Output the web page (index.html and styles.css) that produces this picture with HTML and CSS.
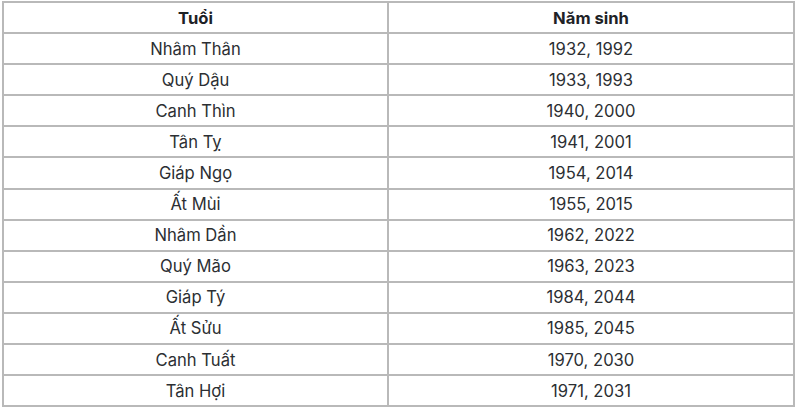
FILE: index.html
```html
<!DOCTYPE html>
<html lang="vi">
<head>
<meta charset="utf-8">
<link rel="stylesheet" href="styles.css">
</head>
<body>
<table class="age-table">
  <colgroup><col class="col-age"><col class="col-year"></colgroup>
  <thead>
    <tr><th>Tuổi</th><th>Năm sinh</th></tr>
  </thead>
  <tbody>
    <tr><td>Nhâm Thân</td><td>1932, 1992</td></tr>
    <tr><td>Quý Dậu</td><td>1933, 1993</td></tr>
    <tr><td>Canh Thìn</td><td>1940, 2000</td></tr>
    <tr><td>Tân Tỵ</td><td>1941, 2001</td></tr>
    <tr><td>Giáp Ngọ</td><td>1954, 2014</td></tr>
    <tr><td>Ất Mùi</td><td>1955, 2015</td></tr>
    <tr><td>Nhâm Dần</td><td>1962, 2022</td></tr>
    <tr><td>Quý Mão</td><td>1963, 2023</td></tr>
    <tr><td>Giáp Tý</td><td>1984, 2044</td></tr>
    <tr><td>Ất Sửu</td><td>1985, 2045</td></tr>
    <tr><td>Canh Tuất</td><td>1970, 2030</td></tr>
    <tr><td>Tân Hợi</td><td>1971, 2031</td></tr>
  </tbody>
</table>
</body>
</html>
```
FILE: styles.css
```css
html, body {
  margin: 0;
  padding: 0;
  background: #ffffff;
}
body {
  padding: 1px 0 0 2px;
  font-family: Inter, "Noto Sans", "Liberation Sans", sans-serif;
}
.age-table {
  border-collapse: collapse;
  width: 791px;
  table-layout: fixed;
}
.col-age { width: 385px; }
.col-year { width: 406px; }
.age-table th,
.age-table td {
  border: 2px solid #b9b9b9;
  height: 29.1px;
  padding: 0;
  text-align: center;
  vertical-align: middle;
  font-size: 16.6px;
  line-height: 20px;
}
.age-table th {
  font-weight: 700;
  color: #1e2226;
}
.age-table td {
  font-weight: 400;
  color: #2c2f33;
}
```
